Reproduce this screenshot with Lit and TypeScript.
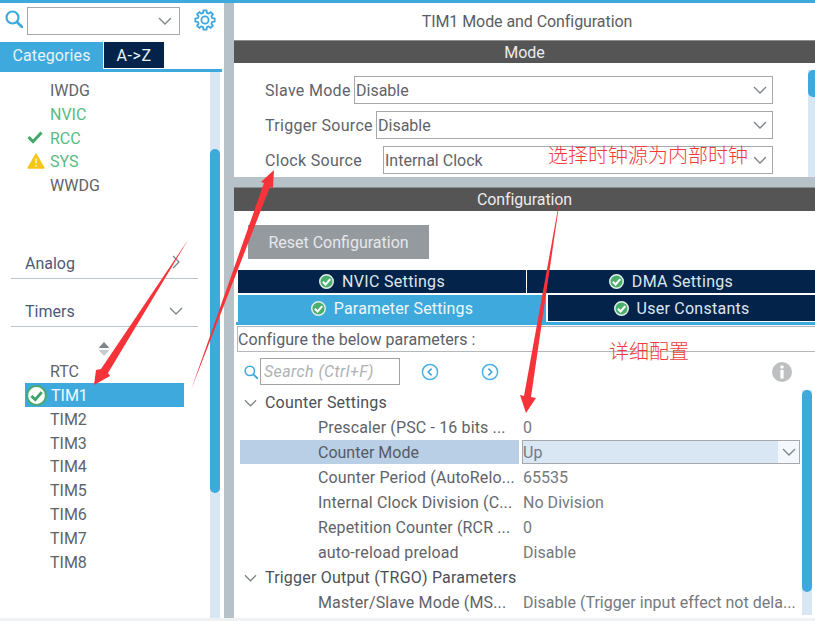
import { LitElement, html, css, svg } from "lit";
import { customElement } from "lit/decorators.js";

const chevron = (w = 14, h = 8, c = "#7d8488") => html`<svg class="chev" width=${w} height=${h} viewBox="0 0 14 8"><path d="M1 1 L7 7 L13 1" fill="none" stroke=${c} stroke-width="1.3"/></svg>`;

const checkBadge = (size: number, fill: string, ring: string, tick: string) => html`<svg class="badge" width=${size} height=${size} viewBox="0 0 20 20">
  <circle cx="10" cy="10" r="9" fill=${fill} stroke=${ring} stroke-width="2"/>
  <path d="M5.2 10.4 L8.8 14 L15 6.8" fill="none" stroke=${tick} stroke-width="2.8"/>
</svg>`;

const gearPath = (() => {
  const cx = 11, cy = 11, pts: string[] = [];
  const teeth = 8;
  for (let i = 0; i < teeth; i++) {
    const a = (i * 2 * Math.PI) / teeth;
    const s = Math.PI / teeth;
    const p = (r: number, t: number) => `${(cx + r * Math.cos(t)).toFixed(2)} ${(cy + r * Math.sin(t)).toFixed(2)}`;
    pts.push(p(9.8, a - s * 0.42), p(9.8, a + s * 0.42), p(7.4, a + s * 0.62), p(7.4, a + s * 1.38));
  }
  return "M" + pts.join(" L") + " Z";
})();

const searchIcon = (size: number, sw: number) => html`<svg class="search" width=${size} height=${size} viewBox="0 0 18 18">
  <circle cx="7.5" cy="7.5" r="6" fill="none" stroke="#3ea9dc" stroke-width=${sw}/>
  <path d="M12 12 L17 17" stroke="#3ea9dc" stroke-width=${sw + 0.4} stroke-linecap="round"/>
</svg>`;

const navBtn = (dir: "l" | "r") => html`<svg width="18" height="18" viewBox="0 0 18 18">
  <circle cx="9" cy="9" r="7.6" fill="none" stroke="#4db3e2" stroke-width="1.5"/>
  <path d=${dir === "l" ? "M10.6 5.6 L7.2 9 L10.6 12.4" : "M7.4 5.6 L10.8 9 L7.4 12.4"} fill="none" stroke="#3ea9dc" stroke-width="1.6"/>
</svg>`;

@customElement("app-root")
export class AppRoot extends LitElement {
  static styles = css`
    :host { display: block; position: relative; width: 815px; height: 621px; overflow: hidden; background: #fff;
      font-family: Roboto, "Noto Sans CJK SC", sans-serif; font-size: 16px; color: #5f6369; }
    * { box-sizing: border-box; }
    .top { height: 3px; background: #3ea9dc; }
    .main { display: flex; height: 615px; }
    .bottom { height: 3px; background: #eff1f3; }

    .left { width: 224px; display: flex; flex-direction: column; flex: none; }
    .divider { width: 10px; background: #b6c2c8; flex: none; }
    .right { flex: 1; min-width: 0; display: flex; flex-direction: column; }

    .search-row { height: 39px; display: flex; align-items: flex-start; padding: 4px 0 0 5px; }
    .search-row .search { margin-top: 3px; }
    .combo { width: 153px; height: 28px; margin-left: 4px; border: 1px solid #a5a9ac; display: flex; align-items: center; justify-content: flex-end; padding-right: 7px; }
    .gear { margin: 2px 0 0 14px; }

    .cat-tabs { display: flex; height: 27px; width: 222px; gap: 1px; }
    .cat-tab { height: 27px; display: flex; align-items: center; justify-content: center; color: #e8f3fa; }
    .cat-tab.on { width: 103px; background: #3ea9dc; letter-spacing: 0.1px; }
    .cat-tab.off { width: 60px; height: 26px; background: #03234b; letter-spacing: 0.6px; }
    .cat-line { height: 3px; width: 222px; background: #3ea9dc; }

    .cat-body { flex: 1; min-height: 0; display: flex; width: 220px; }
    .cat-list { width: 210px; padding-top: 6px; flex: none; }
    .item { height: 23.8px; line-height: 23.8px; padding: 1px 0 0 50px; position: relative; }
    .item.green { color: #57bb83; }
    .mark { position: absolute; left: 27px; top: 4px; }
    .group { margin-left: 11px; width: 187px; border-bottom: 1px solid #bcc5cb; display: flex; align-items: flex-end; justify-content: space-between; padding: 0 15px 4px 14px; line-height: 20px; color: #4d5a75; }
    .group.analog { height: 32px; margin-top: 50px; }
    .group.timers { height: 48px; }
    .group.timers .chev { margin-bottom: 7px; }
    .group.analog svg { margin-bottom: 5px; margin-right: 3px; }
    .updown { height: 32px; display: flex; justify-content: center; padding: 15px 3px 0 0; width: 210px; }
    .item.sel { margin-left: 25px; width: 159px; height: 24px; line-height: 24px; background: #3ea9dc; color: #f2f9fd; padding: 1px 0 0 26px; }
    .item.sel .badge { position: absolute; left: 1px; top: 2px; }
    .vbar { width: 10px; background: #d9e7f5; position: relative; flex: none; }
    .vbar i { position: absolute; left: 0; right: 0; background: #3ea9dc; border-radius: 5px; }
    .cat-bar i { top: 77px; height: 344px; }

    .title { height: 37px; display: flex; align-items: center; justify-content: center; padding-left: 5px; color: #5a5e63; letter-spacing: -0.07px; }
    .bar { background: #555; color: #ececec; display: flex; align-items: center; justify-content: center; border-top: 1px solid #8c8f90; }
    .bar.mode { height: 23px; }
    .bar.conf { height: 24px; letter-spacing: -0.1px; }
    .mode-body { height: 114px; display: flex; }
    .fields { flex: 1; padding: 13px 35px 0 31px; display: flex; flex-direction: column; gap: 7px; }
    .frow { display: flex; align-items: center; height: 28px; letter-spacing: 0.3px; }
    .lbl { flex: none; }
    .lbl.s { width: 89px; } .lbl.t { width: 111px; } .lbl.c { width: 118px; }
    .sel-box { flex: 1; height: 28px; border: 1px solid #a5a9ac; display: flex; align-items: center; justify-content: space-between; padding: 0 5px 0 1px; letter-spacing: 0; }
    .mode-bar { width: 7px; margin-top: 7px; background: #d9e7f5; position: relative; flex: none; }
    .mode-bar i { position: absolute; left: 0; right: 0; top: 0; height: 27px; background: #3ea9dc; border-radius: 5px 0 0 5px; }
    .gap { height: 10px; background: #b6c2c8; flex: none; }

    .conf-body { flex: 1; min-height: 0; display: flex; flex-direction: column; }
    .reset { margin: 14px 0 0 14px; width: 181px; height: 34px; background: #959a9f; color: #e6e8ea; display: flex; align-items: center; justify-content: center; flex: none; }
    .tabs { margin: 11px 0 0 4px; display: flex; flex-direction: column; gap: 2px; flex: none; }
    .tabrow { display: flex; gap: 1px; }
    .tab { height: 23px; background: #03234b; color: #dfe6ee; display: flex; align-items: center; justify-content: center; gap: 8px; letter-spacing: 0.33px; }
    .tab.w1 { width: 288px; } .tab.w2 { flex: 1; }
    .tabrow.r2 { gap: 2px; }
    .tab.param { width: 308px; height: 27px; background: #3ea9dc; color: #eef7fc; letter-spacing: 0.15px; }
    .tab.user { flex: 1; height: 26px; letter-spacing: 0.25px; }
    .tab-line { height: 3px; margin-left: 2px; background: #3ea9dc; flex: none; }
    .hint { margin: 1px 0 0 3px; height: 26px; border: 1px solid #b5b8bb; border-right: none; display: flex; align-items: center; padding-left: 0; letter-spacing: 0.06px; color: #5c6068; flex: none; }
    .tools { margin-top: 6px; height: 27px; display: flex; align-items: center; padding-left: 10px; position: relative; flex: none; }
    .tools .search { margin-right: 2px; }
    .finput { width: 140px; height: 27px; border: 1px solid #9fa3a6; color: #aeb1b4; font-style: italic; padding-left: 3px; display: flex; align-items: center; letter-spacing: 0.4px; }
    .tools .nav { margin-left: 21px; display: flex; }
    .tools .nav + .nav { margin-left: 42px; }
    .tools .info { margin-left: auto; margin-right: 23px; display: flex; }

    .tree-wrap { margin-top: 5px; display: flex; height: 225px; flex: none; padding-left: 6px; }
    .tree { width: 560px; flex: none; }
    .trow { height: 25px; display: flex; align-items: center; white-space: nowrap; }
    .thead { padding-left: 4px; color: #4b5058; gap: 8px; letter-spacing: 0.2px; }
    .tlabel { width: 280px; padding-left: 78px; height: 100%; display: flex; align-items: center; flex: none; letter-spacing: 0.14px; }
    .tval { margin-left: 3px; color: #75797e; letter-spacing: 0.03px; }
    .trow.active { height: 24px; margin-bottom: 1px; }
    .trow.active .tlabel { background: #b8cfe5; color: #565b63; width: 279px; letter-spacing: 0; }
    .tsel { margin-left: 3px; width: 278px; height: 100%; background: #d9e7f5; border: 1px solid #a5a9ac; display: flex; align-items: center; justify-content: space-between; color: #75797e; }
    .tsel .arrow { width: 21px; height: 100%; background: #f4f8fc; display: flex; align-items: center; justify-content: center; }
    .tree-bar { margin-left: 2px; }
    .tree-bar i { top: 0; height: 202px; }

    .marks { position: absolute; inset: 0; pointer-events: none; }
    .note { position: absolute; color: #f33a3a; font-family: "Noto Sans CJK SC", sans-serif; line-height: 1; white-space: nowrap; font-weight: 300; }
    .note.a { left: 548px; top: 145px; font-size: 20px; }
    .note.b { left: 609px; top: 341px; font-size: 20px; }
  `;

  render() {
    const rows: [string, string][] = [
      ["Counter Period (AutoRelo...", "65535"],
      ["Internal Clock Division (C...", "No Division"],
      ["Repetition Counter (RCR ...", "0"],
      ["auto-reload preload", "Disable"],
    ];
    return html`
      <div class="top"></div>
      <div class="main">
        <div class="left">
          <div class="search-row">
            ${searchIcon(18, 2.2)}
            <div class="combo">${chevron()}</div>
            <svg class="gear" width="22" height="22" viewBox="0 0 22 22">
              <path d=${gearPath} fill="none" stroke="#3ea9dc" stroke-width="1.8" stroke-linejoin="round"/>
              <circle cx="11" cy="11" r="3.6" fill="none" stroke="#3ea9dc" stroke-width="1.8"/>
            </svg>
          </div>
          <div class="cat-tabs">
            <div class="cat-tab on">Categories</div>
            <div class="cat-tab off">A-&gt;Z</div>
          </div>
          <div class="cat-line"></div>
          <div class="cat-body">
            <div class="cat-list">
              <div class="item">IWDG</div>
              <div class="item green">NVIC</div>
              <div class="item green"><svg class="mark" width="16" height="14" viewBox="0 0 16 14"><path d="M1.5 7 L6 11.5 L14.5 2.5" fill="none" stroke="#43a86c" stroke-width="3"/></svg>RCC</div>
              <div class="item green"><svg class="mark" width="18" height="16" viewBox="0 0 18 16"><path d="M9 1 L17 15 L1 15 Z" fill="#f5c518" stroke="#f5c518" stroke-width="1.4" stroke-linejoin="round"/><path d="M9 5.5 V10.5 M9 12 V13.5" stroke="#fff6cf" stroke-width="1.5"/></svg>SYS</div>
              <div class="item">WWDG</div>
              <div class="group analog"><span>Analog</span><svg width="8" height="14" viewBox="0 0 8 14"><path d="M1 1 L7 7 L1 13" fill="none" stroke="#7d8488" stroke-width="1.3"/></svg></div>
              <div class="group timers"><span>Timers</span>${chevron()}</div>
              <div class="updown"><svg width="12" height="14" viewBox="0 0 12 14"><path d="M6 0 L11.5 6 H0.5 Z" fill="#7f8488"/><path d="M6 14 L11.5 8 H0.5 Z" fill="#c9cccf"/></svg></div>
              <div class="item">RTC</div>
              <div class="item sel">${checkBadge(21, "#fff", "#4aa96f", "#3fa566")}TIM1</div>
              ${["TIM2", "TIM3", "TIM4", "TIM5", "TIM6", "TIM7", "TIM8"].map((t) => html`<div class="item">${t}</div>`)}
            </div>
            <div class="vbar cat-bar"><i></i></div>
          </div>
        </div>
        <div class="divider"></div>
        <div class="right">
          <div class="title">TIM1 Mode and Configuration</div>
          <div class="bar mode">Mode</div>
          <div class="mode-body">
            <div class="fields">
              <div class="frow"><span class="lbl s">Slave Mode</span><div class="sel-box">Disable ${chevron()}</div></div>
              <div class="frow"><span class="lbl t">Trigger Source</span><div class="sel-box">Disable ${chevron()}</div></div>
              <div class="frow"><span class="lbl c">Clock Source</span><div class="sel-box">Internal Clock ${chevron()}</div></div>
            </div>
            <div class="mode-bar"><i></i></div>
          </div>
          <div class="gap"></div>
          <div class="bar conf">Configuration</div>
          <div class="conf-body">
            <div class="reset">Reset Configuration</div>
            <div class="tabs">
              <div class="tabrow">
                <div class="tab w1">${checkBadge(15, "#4cae6d", "#dff1e6", "#fff")}NVIC Settings</div>
                <div class="tab w2">${checkBadge(15, "#4cae6d", "#dff1e6", "#fff")}DMA Settings</div>
              </div>
              <div class="tabrow r2">
                <div class="tab param">${checkBadge(15, "#4cae6d", "#dff1e6", "#fff")}Parameter Settings</div>
                <div class="tab user">${checkBadge(15, "#4cae6d", "#dff1e6", "#fff")}User Constants</div>
              </div>
            </div>
            <div class="tab-line"></div>
            <div class="hint">Configure the below parameters :</div>
            <div class="tools">
              ${searchIcon(14, 2)}
              <div class="finput">Search (Ctrl+F)</div>
              <span class="nav">${navBtn("l")}</span>
              <span class="nav">${navBtn("r")}</span>
              <span class="info"><svg width="20" height="20" viewBox="0 0 20 20"><circle cx="10" cy="10" r="10" fill="#bdbfc1"/><circle cx="10" cy="5" r="1.8" fill="#fff"/><rect x="8.4" y="8" width="3.2" height="8.6" fill="#fff"/></svg></span>
            </div>
            <div class="tree-wrap">
              <div class="tree">
                <div class="trow thead">${chevron(13, 8)}Counter Settings</div>
                <div class="trow"><div class="tlabel">Prescaler (PSC - 16 bits ...</div><div class="tval">0</div></div>
                <div class="trow active"><div class="tlabel">Counter Mode</div><div class="tsel">Up <span class="arrow">${chevron()}</span></div></div>
                ${rows.map(([l, v]) => html`<div class="trow"><div class="tlabel">${l}</div><div class="tval">${v}</div></div>`)}
                <div class="trow thead">${chevron(13, 8)}Trigger Output (TRGO) Parameters</div>
                <div class="trow"><div class="tlabel">Master/Slave Mode (MS...</div><div class="tval">Disable (Trigger input effect not dela...</div></div>
              </div>
              <div class="vbar tree-bar"><i></i></div>
            </div>
          </div>
        </div>
      </div>
      <div class="bottom"></div>
      <svg class="marks" width="815" height="621" viewBox="0 0 815 621">
        ${svg`<g fill="#f7333a">
          <polygon points="188,240 108,373 110,376 94,385 96,370 101,369"/>
          <polygon points="191,390 270,187 273,188 274,170 261,182 264,183"/>
          <polygon points="561,192 531,397 536,398 526,413 520,395 524,396"/>
        </g>`}
      </svg>
      <div class="note a">选择时钟源为内部时钟</div>
      <div class="note b">详细配置</div>
    `;
  }
}
